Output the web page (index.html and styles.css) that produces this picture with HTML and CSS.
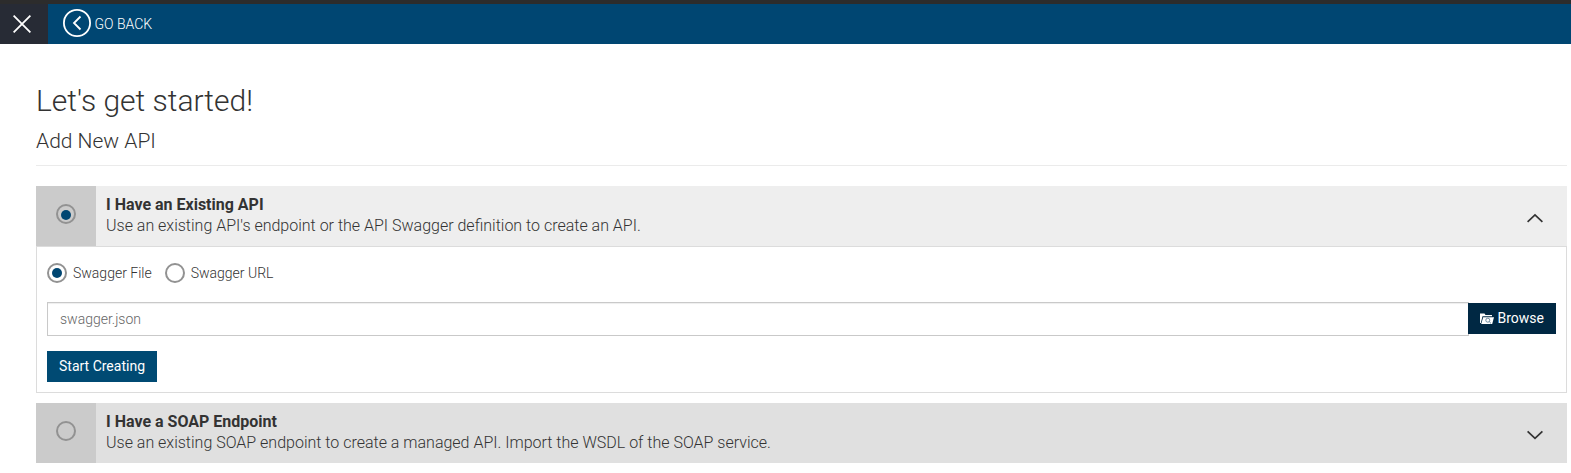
FILE: index.html
```html
<!DOCTYPE html>
<html lang="en">
<head>
<meta charset="utf-8">
<title>Add New API</title>
<link rel="stylesheet" href="styles.css">
</head>
<body>
<header class="topbar">
  <button class="close" aria-label="Close"><svg width="18" height="18" viewBox="0 0 18 18"><path d="M.6.6 17.4 17.4M17.4.6.6 17.4"/></svg></button>
  <a class="back"><svg width="28" height="28" viewBox="0 0 28 28"><circle cx="14" cy="14" r="13.1"/><path d="M17.5 7.5 11 14l6.5 6.5"/></svg><span>GO BACK</span></a>
</header>
<main class="page">
  <h1 class="title">Let's get started!</h1>
  <h2 class="subtitle">Add New API</h2>
  <section class="option option-open">
    <div class="option-head">
      <div class="option-radio"><span class="radio checked"></span></div>
      <div class="option-text"><strong>I Have an Existing API</strong><p>Use an existing API's endpoint or the API Swagger definition to create an API.</p></div>
      <svg class="chevron" width="16" height="10" viewBox="0 0 16 10"><path d="M.6 8.8 8 1.8l7.4 7"/></svg>
    </div>
    <div class="option-body">
      <div class="choices">
        <label class="choice"><span class="radio checked"></span>Swagger File</label>
        <label class="choice"><span class="radio"></span>Swagger URL</label>
      </div>
      <div class="file-row">
        <div class="file-input">swagger.json</div>
        <button class="btn browse"><svg width="14" height="12" viewBox="0 0 14 12"><path class="folder" d="M0 .5h4.5l1 1.5H12v1.2H2.5L.8 10H0z"/><path class="folder" d="M3.2 4.2H14L12.2 11H1.2z"/><circle cx="7.8" cy="7.2" r="2"/><path class="handle" d="m9.2 8.6 1.8 1.8"/></svg>Browse</button>
      </div>
      <button class="btn">Start Creating</button>
    </div>
  </section>
  <section class="option option-closed">
    <div class="option-head">
      <div class="option-radio"><span class="radio"></span></div>
      <div class="option-text"><strong>I Have a SOAP Endpoint</strong><p>Use an existing SOAP endpoint to create a managed API. Import the WSDL of the SOAP service.</p></div>
      <svg class="chevron" width="16" height="10" viewBox="0 0 16 10"><path d="M.6 1.4 8 8.4l7.4-7"/></svg>
    </div>
  </section>
</main>
</body>
</html>
```
FILE: styles.css
```css
* { box-sizing: border-box; }
body {
  margin: 0;
  background: #fff;
  color: #333;
  font: 300 14px/20px Roboto, sans-serif;
  overflow: hidden;
}
svg { fill: none; flex: none; }
button { border: 0; font: inherit; border-radius: 0; }
.topbar {
  display: flex;
  height: 44px;
  border-top: 4px solid #2c2c2c;
  background: #004672;
  color: #fff;
}
.close {
  display: flex;
  align-items: center;
  justify-content: center;
  width: 48px;
  padding: 0 4px 0 0;
  background: #272b35;
  stroke: #fff;
  stroke-width: 1.8;
}
.back {
  display: flex;
  align-items: center;
  gap: 3.5px;
  padding-left: 15px;
}
.back svg { stroke: #fff; stroke-width: 1.8; margin-top: -3px; }
.page { padding: 40px 4px 0 36px; }
.title { margin: 0; font-size: 30px; font-weight: 300; line-height: 33px; }
.subtitle {
  margin: 13px 0 20px;
  padding-bottom: 12px;
  border-bottom: 1px solid #ebebeb;
  font-size: 21px;
  font-weight: 300;
  line-height: 23px;
}
.option { margin-bottom: 10px; }
.option-head {
  display: flex;
  height: 60px;
  background: #eee;
}
.option-closed .option-head { background: #e0e0e0; }
.option-radio { width: 60px; padding: 18px 20px; background: #cbcbcb; }
.option-text {
  flex: 1;
  padding: 8px 10px;
  font-size: 16px;
  line-height: 21px;
}
.option-text strong { display: block; font-weight: 700; }
.option-text p { margin: 0; }
.chevron {
  margin: 27px 24px 0 0;
  stroke: #333;
  stroke-width: 1.7;
}
.radio {
  display: flex;
  align-items: center;
  justify-content: center;
  width: 20px;
  height: 20px;
  border: 2px solid #929292;
  border-radius: 50%;
}
.checked::before {
  content: "";
  width: 10px;
  height: 10px;
  border-radius: 50%;
  background: #004672;
}
.option-radio .checked::before { transform: translateY(1px); }
.option-body {
  height: 147px;
  padding: 16px 10px 10px;
  border: 1px solid #dcdcdc;
  background: #fff;
}
.choices { display: flex; gap: 13px; height: 20px; margin-bottom: 19px; }
.choice { display: flex; align-items: center; gap: 6px; }
.file-row { display: flex; align-items: flex-start; height: 34px; margin-bottom: 15px; }
.file-input {
  flex: 1;
  height: 34px;
  margin-right: -1px;
  padding: 6px 12px;
  border: 1px solid #c9c9c9;
  box-shadow: inset 0 1px 1px #eee;
  color: #666;
}
.btn {
  height: 31px;
  padding: 0 12px 1px;
  background: #004a73;
  color: #fff;
  font-weight: 400;
}
.browse {
  position: relative;
  display: flex;
  align-items: center;
  gap: 4px;
  margin-top: 1px;
  background: #002843;
}
.browse svg { margin-top: 1px; }
.folder { fill: #fff; }
.browse circle, .handle { stroke: #5f7f96; stroke-width: .9; }
```
